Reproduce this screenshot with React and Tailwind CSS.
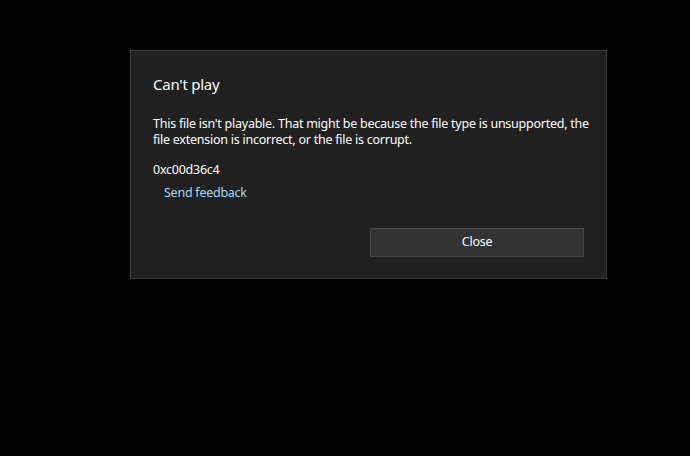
export default function App() {
    return (
        <div
            className="w-[690px] h-[456px] bg-black pl-[130px] pt-[50px]"
            style={{ fontFamily: '"Segoe UI", "Noto Sans", "Open Sans", sans-serif' }}
        >
            <div className="w-[477px] h-[229px] border border-[#3a3a3a] bg-[#202020] flex flex-col pl-[22px] pr-[12px] tracking-[-0.25px]">
                <h1 className="mt-[22px] text-[15px] leading-[22px] text-white">Can't play</h1>
                <p className="mt-[21px] text-[12.5px] leading-[16px] text-white">
                    This file isn't playable. That might be because the file type is unsupported, the file extension is incorrect, or the file is corrupt.
                </p>
                <div className="mt-[14px] text-[12.5px] leading-[16px] text-white">0xc00d36c4</div>
                <a className="mt-[7px] ml-[11px] text-[12.5px] leading-[16px] text-[#9fd8ee] cursor-pointer">
                    Send feedback
                </a>
                <div className="mt-auto mb-[21px] pr-[10px] flex justify-end">
                    <button className="w-[214px] h-[29px] bg-[#333333] border border-[#474747] text-[12.5px] text-white">
                        Close
                    </button>
                </div>
            </div>
        </div>
    );
}
